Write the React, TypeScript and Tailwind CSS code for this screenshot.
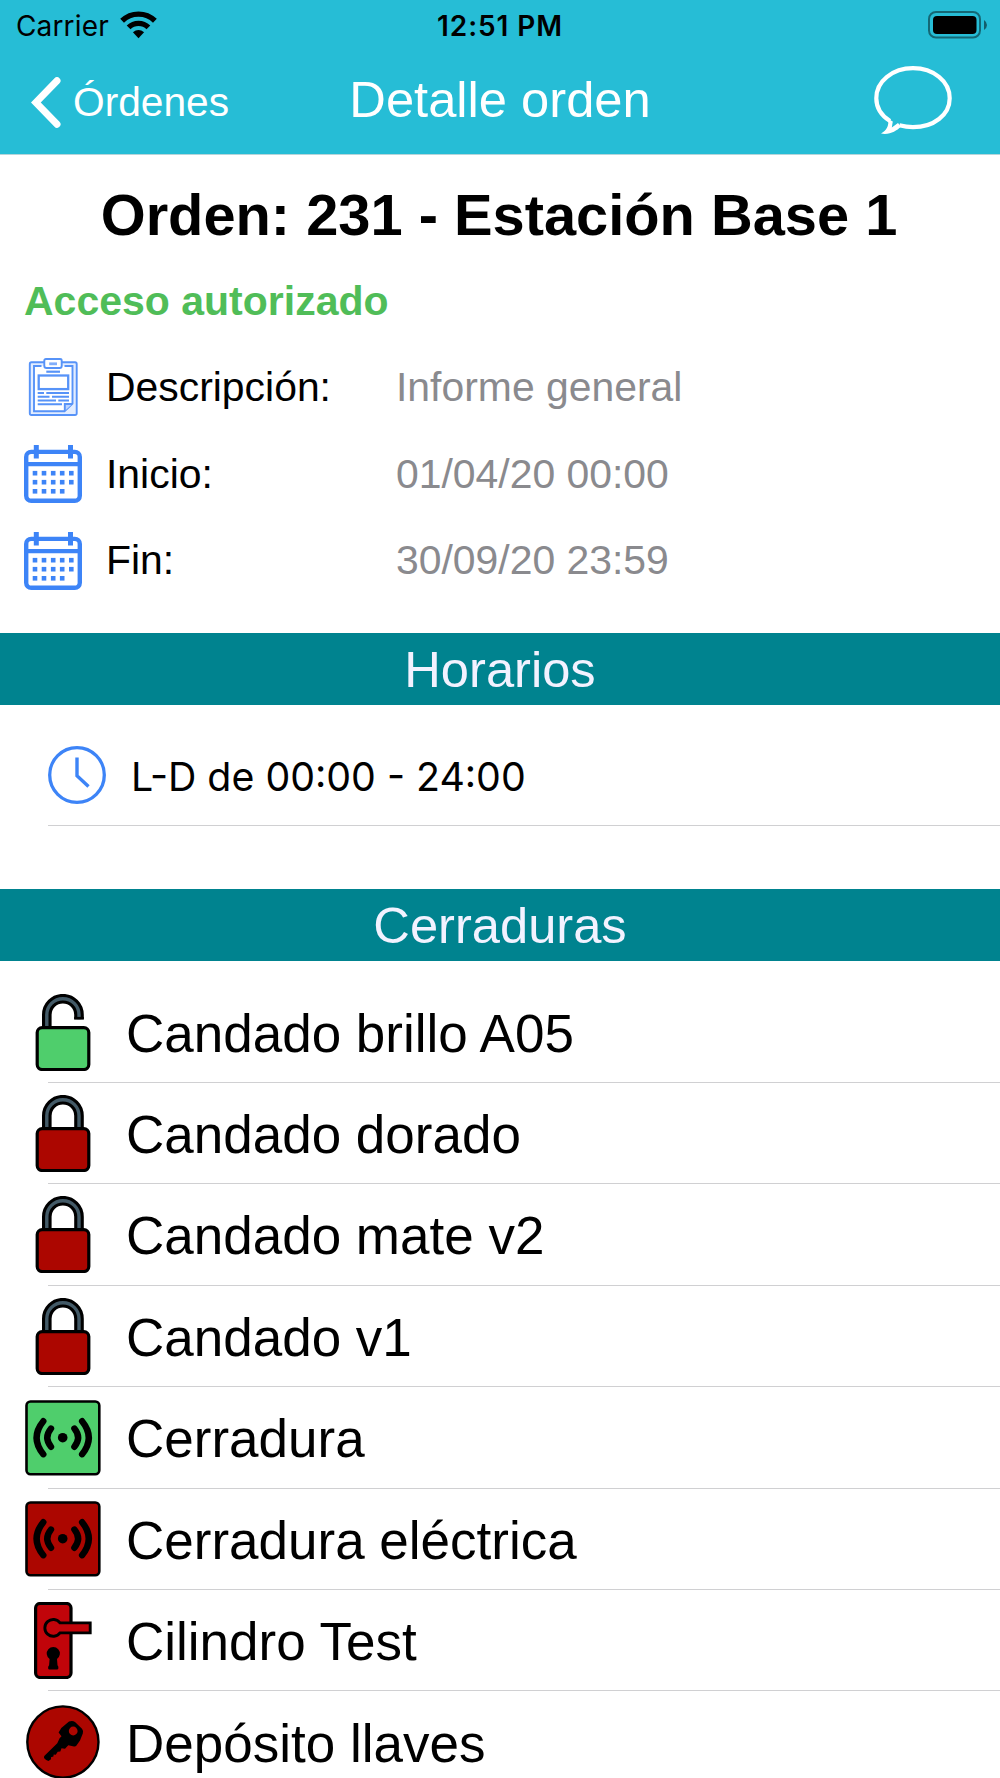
import type { ReactNode } from 'react';

type LockKind = 'padlock' | 'reader' | 'cylinder' | 'depot';

const locks: { name: string; kind: LockKind; open?: boolean }[] = [
    { name: 'Candado brillo A05', kind: 'padlock', open: true },
    { name: 'Candado dorado', kind: 'padlock' },
    { name: 'Candado mate v2', kind: 'padlock' },
    { name: 'Candado v1', kind: 'padlock' },
    { name: 'Cerradura', kind: 'reader', open: true },
    { name: 'Cerradura eléctrica', kind: 'reader' },
    { name: 'Cilindro Test', kind: 'cylinder' },
    { name: 'Depósito llaves', kind: 'depot' },
];

function WifiIcon() {
    return (
        <svg className="w-[37px] h-[28px] shrink-0" viewBox="0 0 37 28">
            <path d="M18.5 27.2 L12.9 21.3 Q18.5 16.8 24.1 21.3 Z" />
            <path d="M8.6 16.4 A14.2 14.2 0 0 1 28.4 16.4" fill="none" stroke="#000" strokeWidth="5.4" />
            <path d="M2.1 9.8 A23.4 23.4 0 0 1 34.9 9.8" fill="none" stroke="#000" strokeWidth="5.4" />
        </svg>
    );
}

function BatteryIcon() {
    return (
        <svg className="w-[60px] h-[28px] shrink-0" viewBox="0 0 60 28">
            <rect x="1" y="1" width="51" height="25.5" rx="7" fill="none" stroke="#000" strokeOpacity="0.45" strokeWidth="2" />
            <rect x="5" y="5" width="43.5" height="18" rx="4" />
            <path d="M56 9 Q59 11 59 14 Q59 17 56 19 Z" fillOpacity="0.5" />
        </svg>
    );
}

function ChatIcon() {
    return (
        <svg className="w-[78px] h-[70px] shrink-0" viewBox="0 0 78 70" fill="none" stroke="#fff">
            <path
                d="M16 56 C7 50.3 2.3 42.5 2.3 33.2 C2.3 16.4 18.5 3.2 39 3.2 C59.5 3.2 75.7 16.4 75.7 33.2 C75.7 50 59.5 62.2 39 62.2 C34 62.2 30.5 61.7 25.4 60.3"
                strokeWidth="4.2"
            />
            <path d="M14.3 54 L18.8 56.5 L17.8 62.5 L24 58 L27 61.8 C22 66 16.5 70 7 68.6 C12.5 65.5 15 61 14.3 54 Z" fill="#fff" stroke="none" />
        </svg>
    );
}

function ClipboardIcon() {
    return (
        <svg className="w-[58px] h-[58px] shrink-0" viewBox="0 0 58 58" fill="none" stroke="#5793f8" strokeWidth="1.9">
            <path d="M20 4.2 H7.5 Q5.8 4.2 5.8 6 V55.2 Q5.8 57 7.5 57 H51 Q52.7 57 52.7 55.2 V6 Q52.7 4.2 51 4.2 H38" fill="#e3edff" />
            <path d="M17.5 8 H10 V53.3 H40.5 L48.5 45.7 V8 H40.5" fill="#fff" />
            <path d="M40.8 53 V46 H48.3" fill="#bcd4ff" />
            <path d="M22 1 H36 Q37.7 1 37.7 2.5 V8 Q37.7 10 35.7 10 H22.5 Q20.3 10 20.3 8 V2.5 Q20.3 1 22 1 Z" fill="#fff" />
            <path d="M25.2 5.8 H33" strokeWidth="2.8" strokeOpacity="0.75" />
            <path d="M22.3 13.7 H36" strokeWidth="2.2" />
            <rect x="14.7" y="17.5" width="29.5" height="13.6" strokeWidth="2.3" />
            <path d="M13.7 35 H20 M22.3 35 H45 M13.7 38.8 H25.5 M28 38.8 H45 M13.7 42.5 H32 M34.3 42.5 H45 M13.7 46.2 H38" strokeWidth="2" />
        </svg>
    );
}

function CalendarIcon() {
    const dots = [11, 20, 29.2, 38.2, 47.3];
    return (
        <svg className="w-[58px] h-[58px] shrink-0" viewBox="0 0 58 58">
            <g fill="none" stroke="#3d84f7">
                <rect x="2.2" y="6.9" width="53.6" height="48.9" rx="5" strokeWidth="4.4" />
                <path d="M2 19.2 H56" strokeWidth="4.2" />
                <path d="M12.3 0 V13.5 M46.5 0 V13.5" strokeWidth="5" />
            </g>
            {[28.2, 37.2, 46.3].map((y, row) =>
                dots.slice(0, row === 2 ? 4 : 5).map((x) => (
                    <rect key={`${x}-${y}`} x={x - 2.3} y={y - 2.3} width="4.6" height="4.6" fill="#3d84f7" />
                ))
            )}
        </svg>
    );
}

function ClockIcon() {
    return (
        <svg className="w-[58px] h-[58px] shrink-0" viewBox="0 0 58 58" fill="none" stroke="#3d84f7">
            <circle cx="29" cy="29" r="27.3" strokeWidth="3.3" />
            <path d="M29 11.5 V29.7 L40.5 40.5" strokeWidth="3.4" />
        </svg>
    );
}

function LockIcon({ kind, open }: { kind: LockKind; open?: boolean }) {
    const fill = open ? '#4fce6c' : '#ac0600';

    if (kind === 'padlock') {
        const shackle = open
            ? 'M21.8 36 V20.8 A16.1 16.1 0 0 1 54 20.8 V25.3'
            : 'M21.8 36 V20.8 A16.1 16.1 0 0 1 54 20.8 V36';
        return (
            <svg className="w-[76px] h-[77px] shrink-0" viewBox="0 0 76 77">
                <path d={shackle} fill="none" stroke="#000" strokeWidth="9.6" />
                <path d={shackle} fill="none" stroke="#435a67" strokeWidth="3.4" />
                {open && <path d="M49.2 24.2 H58.8" stroke="#000" strokeWidth="2.6" />}
                <rect x="12.2" y="33.6" width="51.6" height="41.9" rx="5" fill={fill} stroke="#000" strokeWidth="3.2" />
            </svg>
        );
    }

    if (kind === 'reader') {
        return (
            <svg className="w-[76px] h-[76px] shrink-0" viewBox="0 0 76 76">
                <rect x="1.5" y="1.5" width="72.8" height="72.8" rx="4" fill={fill} stroke="#000" strokeWidth="2.6" />
                <circle cx="37.7" cy="37.7" r="4.8" />
                <g fill="none" stroke="#000" strokeLinecap="round" strokeWidth="6.4">
                    <path d="M26 28.6 Q18.6 37.7 26 46.8" />
                    <path d="M49.4 28.6 Q56.8 37.7 49.4 46.8" />
                    <path d="M18.3 21.2 Q4.9 37.7 18.3 54.2" />
                    <path d="M57.1 21.2 Q70.5 37.7 57.1 54.2" />
                </g>
            </svg>
        );
    }

    if (kind === 'cylinder') {
        return (
            <svg className="w-[76px] h-[77px] shrink-0" viewBox="0 0 76 77">
                <rect x="10.6" y="1.5" width="35.4" height="74" rx="4.5" fill="#c1040a" stroke="#000" strokeWidth="3.2" />
                <path d="M35 20.9 H65.2 V30.9 H35 A8.4 8.4 0 1 1 35 20.9 Z" fill="#c1040a" stroke="#000" strokeWidth="2.9" />
                <path d="M24.6 57 A6.6 6.6 0 1 1 32 57 L32.5 63.2 Q33.6 64 33.4 66.2 Q33.2 67.5 32 67.5 H24.5 Q23.3 67.5 23.1 66.2 Q23 64 24.1 63.2 Z" />
            </svg>
        );
    }

    return (
        <svg className="w-[76px] h-[76px] shrink-0" viewBox="0 0 76 76">
            <circle cx="37.9" cy="38" r="35.6" fill={fill} stroke="#000" strokeWidth="2.4" />
            <path d="M44 17.5 Q47.5 16.2 50 18 L57 24.7 Q58.6 26.5 57.8 29.5 L55 36.5 L51.3 41.8 Q50.5 42.8 49 42.5 L43.3 41.3 L40 44.7 L36.5 44.3 L35.3 47.5 L32.7 47.7 L30.8 50.7 L28.7 50.5 L28.4 52.6 L26 53.3 L26 55.2 L23.5 57 Q21.5 57 19.2 54.3 Q18.5 53 19.5 51.7 L32.3 39.2 L34.6 34.3 L36.5 32.2 L33.6 28.5 L36.3 24 Z" />
            <circle cx="48.2" cy="27" r="4.4" fill={fill} />
        </svg>
    );
}

function InfoRow({ icon, label, value }: { icon: ReactNode; label: string; value: string }) {
    return (
        <div className="flex items-center h-[86.67px] pl-6 text-[40.9px] leading-none">
            {icon}
            <span className="w-[290px] pl-6">{label}</span>
            <span className="pl-6 text-[#8a8a8e]">{value}</span>
        </div>
    );
}

function SectionTitle({ children }: { children: ReactNode }) {
    return (
        <h2 className="h-[72.33px] pt-0.5 flex items-center justify-center bg-[#00838f] text-[#f2f2ff] text-[50.67px] leading-none">
            {children}
        </h2>
    );
}

export default function App() {
    return (
        <div className="w-[1000px] h-[1778px] overflow-hidden bg-white text-black font-['Liberation_Sans',Arial,sans-serif]">
            <header className="h-[155px] bg-[#26bdd6] border-b border-[#b5d5da]">
                {/* Status bar */}
                <div className="grid grid-cols-3 items-center h-[50px] px-4 font-['Inter',sans-serif] text-[28px] leading-none">
                    <div className="flex items-center gap-[11px]">
                        <span className="pt-px tracking-[0.15px]">Carrier</span>
                        <WifiIcon />
                    </div>
                    <span className="pt-px text-center font-semibold tracking-[0.9px]">12:51 PM</span>
                    <div className="flex justify-end -mr-1">
                        <BatteryIcon />
                    </div>
                </div>

                {/* Navigation bar */}
                <div className="grid grid-cols-3 items-center h-[100px] px-[31px] text-white leading-none">
                    <div className="flex items-center gap-3 pt-1">
                        <svg className="w-[30px] h-[51px] shrink-0" viewBox="0 0 30 51" fill="none" stroke="#fff" strokeWidth="7" strokeLinecap="round" strokeLinejoin="miter">
                            <path d="M26 3.7 L4.8 25.5 L26 47.3" />
                        </svg>
                        <span className="text-[40.7px]">Órdenes</span>
                    </div>
                    <h1 className="text-center text-[50.67px] whitespace-nowrap">Detalle orden</h1>
                    <div className="flex justify-end pr-[17px]">
                        <ChatIcon />
                    </div>
                </div>
            </header>

            <section className="h-[478px]">
                <h2 className="pt-[31px] pb-px pr-[2px] text-center text-[57.8px] font-bold leading-[58px]">Orden: 231 - Estación Base 1</h2>
                <p className="mt-9 mb-[22px] pl-6 text-[41px] font-bold leading-none text-[#50bd58]">Acceso autorizado</p>
                <InfoRow icon={<ClipboardIcon />} label="Descripción:" value="Informe general" />
                <InfoRow icon={<CalendarIcon />} label="Inicio:" value="01/04/20 00:00" />
                <InfoRow icon={<CalendarIcon />} label="Fin:" value="30/09/20 23:59" />
            </section>

            <SectionTitle>Horarios</SectionTitle>
            <div className="h-[183.67px] pl-12 pt-[19px]">
                <div className="flex items-center gap-[25px] h-[102px] border-b border-[#d0d0d2] font-['Inter',sans-serif] text-[39.3px] leading-none">
                    <ClockIcon />
                    <span className="pt-1">L-D de 00:00 - 24:00</span>
                </div>
            </div>

            <SectionTitle>Cerraduras</SectionTitle>
            <ul className="pt-5">
                {locks.map((lock) => (
                    <li key={lock.name} className="h-[101.45px] pl-[25px] flex flex-col">
                        <div className="flex flex-1 items-center gap-[25px] pt-px text-[53px] leading-none">
                            <LockIcon kind={lock.kind} open={lock.open} />
                            <span className="pt-0.5">{lock.name}</span>
                        </div>
                        <div className="ml-[23px] border-b border-[#d0d0d2]" />
                    </li>
                ))}
            </ul>
        </div>
    );
}
